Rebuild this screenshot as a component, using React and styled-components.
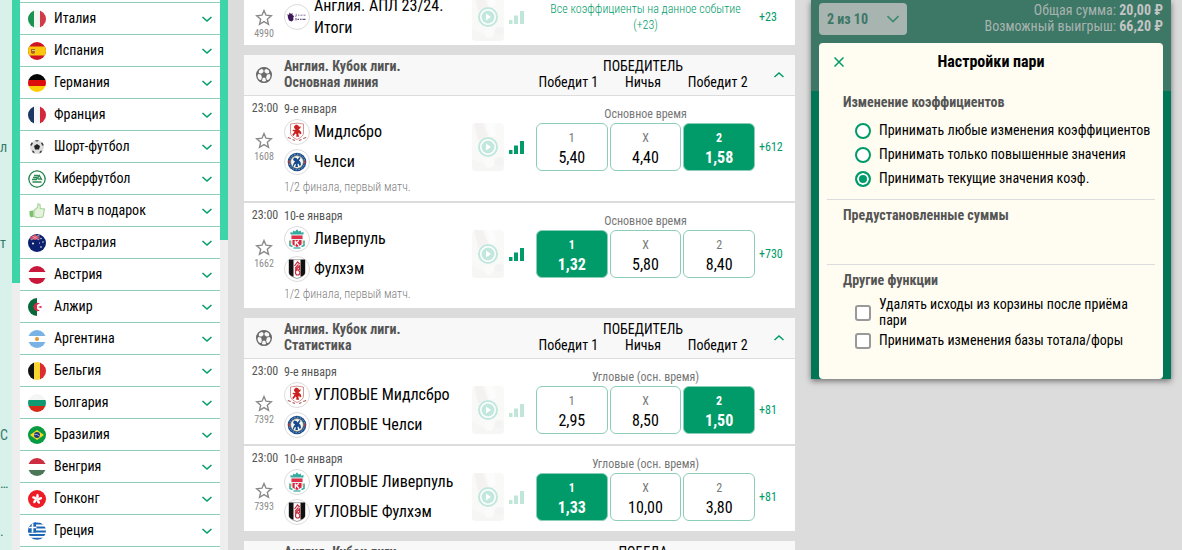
import React, { useState } from "react"
import styled, { createGlobalStyle } from "styled-components"

const GREEN = "#009b69"

const countries = [
    { name: "Италия", icon: "it" },
    { name: "Испания", icon: "es" },
    { name: "Германия", icon: "de" },
    { name: "Франция", icon: "fr" },
    { name: "Шорт-футбол", icon: "ball" },
    { name: "Киберфутбол", icon: "ea" },
    { name: "Матч в подарок", icon: "like" },
    { name: "Австралия", icon: "au" },
    { name: "Австрия", icon: "at" },
    { name: "Алжир", icon: "dz" },
    { name: "Аргентина", icon: "ar" },
    { name: "Бельгия", icon: "be" },
    { name: "Болгария", icon: "bg" },
    { name: "Бразилия", icon: "br" },
    { name: "Венгрия", icon: "hu" },
    { name: "Гонконг", icon: "hk" },
    { name: "Греция", icon: "gr" },
]

const groups = [
    {
        title: "Англия. Кубок лиги.",
        subtitle: "Основная линия",
        market: "ПОБЕДИТЕЛЬ",
        columns: ["Победит 1", "Ничья", "Победит 2"],
        events: [
            {
                id: "1608", time: "23:00", date: "9-е января", live: true, more: "+612",
                teams: [{ name: "Мидлсбро", crest: "mid" }, { name: "Челси", crest: "che" }],
                note: "1/2 финала, первый матч.",
                period: "Основное время", odds: ["5,40", "4,40", "1,58"], picked: 2,
            },
            {
                id: "1662", time: "23:00", date: "10-е января", live: true, more: "+730",
                teams: [{ name: "Ливерпуль", crest: "liv" }, { name: "Фулхэм", crest: "ful" }],
                note: "1/2 финала, первый матч.",
                period: "Основное время", odds: ["1,32", "5,80", "8,40"], picked: 0,
            },
        ],
    },
    {
        title: "Англия. Кубок лиги.",
        subtitle: "Статистика",
        market: "ПОБЕДИТЕЛЬ",
        columns: ["Победит 1", "Ничья", "Победит 2"],
        events: [
            {
                id: "7392", time: "23:00", date: "9-е января", more: "+81",
                teams: [{ name: "УГЛОВЫЕ Мидлсбро", crest: "mid" }, { name: "УГЛОВЫЕ Челси", crest: "che" }],
                period: "Угловые (осн. время)", odds: ["2,95", "8,50", "1,50"], picked: 2,
            },
            {
                id: "7393", time: "23:00", date: "10-е января", more: "+81",
                teams: [{ name: "УГЛОВЫЕ Ливерпуль", crest: "liv" }, { name: "УГЛОВЫЕ Фулхэм", crest: "ful" }],
                period: "Угловые (осн. время)", odds: ["1,33", "10,00", "3,80"], picked: 0,
            },
        ],
    },
    { title: "Англия. Кубок лиги.", market: "ПОБЕДА", columns: [], events: [] },
]

const oddNames = ["1", "X", "2"]
const sports = ["", "", "л", "", "т", "", "", "", "С", "…", "."]

const oddsChanges = [
    { value: "any", label: "Принимать любые изменения коэффициентов" },
    { value: "up", label: "Принимать только повышенные значения" },
    { value: "current", label: "Принимать текущие значения коэф." },
]

export default function App() {
    const [picked, setPicked] = useState({})

    function pick(id, index) {
        setPicked({ ...picked, [id]: index })
    }

    return (
        <Page>
            <GlobalStyle />
            <Sports>
                {sports.map((s, index) => <Sport key={index}>{s}</Sport>)}
            </Sports>
            <Track><Thumb size="283px" /></Track>
            <Countries>
                {countries.map((c) => (
                    <Country key={c.name} type="button">
                        <Flag name={c.icon} />
                        <CountryName>{c.name}</CountryName>
                        <Chevron />
                    </Country>
                ))}
            </Countries>
            <Track><Thumb size="240px" /></Track>
            <Feed>
                <Card>
                    <Outright>
                        <Favourite id="4990" low />
                        <Team>
                            <Crest name="apl" />
                            <span>Англия. АПЛ 23/24.<br />Итоги</span>
                        </Team>
                        <Preview />
                        <Bars />
                        <AllOdds href="#all">Все коэффициенты на данное событие (+23)</AllOdds>
                        <More href="#more">+23</More>
                    </Outright>
                </Card>
                {groups.map((g, index) => (
                    <Card key={index}>
                        <GroupHeader>
                            <Centered><Football /></Centered>
                            <h2>{g.title}<br />{g.subtitle}</h2>
                            <Market>
                                <p>{g.market}</p>
                                <MarketColumns>
                                    {g.columns.map((c) => <span key={c}>{c}</span>)}
                                </MarketColumns>
                            </Market>
                            <Fold type="button" aria-label="Свернуть"><Chevron up /></Fold>
                        </GroupHeader>
                        {g.events.map((e) => (
                            <Event key={e.id}>
                                <div>
                                    <Time>{e.time}</Time>
                                    <Favourite id={e.id} />
                                </div>
                                <Teams>
                                    <DateLine>{e.date}</DateLine>
                                    {e.teams.map((t) => (
                                        <Team key={t.name}>
                                            <Crest name={t.crest} />
                                            <span>{t.name}</span>
                                        </Team>
                                    ))}
                                    {e.note && <Note>{e.note}</Note>}
                                </Teams>
                                <Aligned><Preview /></Aligned>
                                <Aligned><Bars live={e.live} /></Aligned>
                                <div>
                                    <Period>{e.period}</Period>
                                    <Triple>
                                        {e.odds.map((o, i) => (
                                            <Odd
                                                key={i}
                                                type="button"
                                                $picked={(picked[e.id] ?? e.picked) === i}
                                                onClick={() => pick(e.id, i)}
                                            >
                                                <small>{oddNames[i]}</small>
                                                <span>{o}</span>
                                            </Odd>
                                        ))}
                                    </Triple>
                                </div>
                                <Aligned><More href="#more">{e.more}</More></Aligned>
                            </Event>
                        ))}
                    </Card>
                ))}
            </Feed>
            <Coupon />
        </Page>
    )
}

function Coupon() {
    const [change, setChange] = useState("current")

    return (
        <CouponBox>
            <CouponTop>
                <SelectBox>
                    <select aria-label="Система">
                        <option>2 из 10</option>
                    </select>
                    <svg width="12" height="8" viewBox="0 0 12 8" fill="none" stroke="#3d8a72" strokeWidth="1.6">
                        <path d="M.5 1L6 6.500 11.500 1" />
                    </svg>
                </SelectBox>
                <Totals>
                    <p>Общая сумма: <b>20,00 ₽</b></p>
                    <p>Возможный выигрыш: <b>66,20 ₽</b></p>
                </Totals>
            </CouponTop>
            <Settings>
                <SettingsTop>
                    <button type="button" aria-label="Закрыть">
                        <svg width="10" height="10" viewBox="0 0 10 10" stroke={GREEN} strokeWidth="1.5">
                            <path d="M.5 .5l9 9M9.5 .5l-9 9" />
                        </svg>
                    </button>
                    <h2>Настройки пари</h2>
                </SettingsTop>
                <Section>
                    <h3>Изменение коэффициентов</h3>
                    {oddsChanges.map((o) => (
                        <Option key={o.value}>
                            <input
                                type="radio"
                                name="change"
                                checked={change === o.value}
                                onChange={() => setChange(o.value)}
                            />
                            <span>{o.label}</span>
                        </Option>
                    ))}
                </Section>
                <Section $tall>
                    <h3>Предустановленные суммы</h3>
                </Section>
                <Section>
                    <h3>Другие функции</h3>
                    <Option>
                        <input type="checkbox" />
                        <span>Удалять исходы из корзины после приёма пари</span>
                    </Option>
                    <Option>
                        <input type="checkbox" />
                        <span>Принимать изменения базы тотала/форы</span>
                    </Option>
                </Section>
            </Settings>
        </CouponBox>
    )
}

function Favourite({ id, low }) {
    return (
        <Star type="button" $low={low}>
            <svg width="18" height="17" viewBox="0 0 18 17" fill="none" stroke="#8a8a8a" strokeWidth="1.400">
                <path d="M9 1.500l2 4.700 5.300.5-4 3.500 1.200 5.100L9 12.600l-4.500 2.700 1.200-5.100-4-3.500L7 6.200z" />
            </svg>
            <span>{id}</span>
        </Star>
    )
}

function Chevron({ up }) {
    return (
        <svg width="10" height="6" viewBox="0 0 10 6" fill="none" stroke={GREEN} strokeWidth="1.5">
            <path d={up ? "M.5 5L5 1l4.500 4" : "M.5 1L5 5l4.500-4"} />
        </svg>
    )
}

function Preview() {
    return (
        <PreviewBox type="button" aria-label="Трансляция">
            <svg width="32" height="48" viewBox="0 0 32 48">
                <rect width="32" height="48" fill="#f9f9f8" />
                <path d="M2 0h9l5 13-10 5z" fill="#f5f1f1" />
                <path d="M14 0h8l2 12-6 2z" fill="#fcfcfc" />
                <path d="M0 36l14 6 18-8v14H0z" fill="#f6f6f5" />
                <circle cx="17" cy="40" r="5" fill="#fbfbfb" />
                <circle cx="27" cy="38" r="4" fill="#f3f3f3" />
                <circle cx="16" cy="24" r="9" fill="#fff" stroke="#c2e7dc" strokeWidth="2" />
                <circle cx="16" cy="24" r="6.500" fill="#c2e7dc" />
                <path d="M14 20.500l5 3.500-5 3.500z" fill="#fff" />
            </svg>
        </PreviewBox>
    )
}

function Bars({ live }) {
    return (
        <BarsBox>
            <svg width="15" height="13" viewBox="0 0 15 13" fill={live ? GREEN : "#bfe6d9"}>
                <path d="M0 9h3.500v4H0zM5 4.500h4V13H5zM11 0h4v13h-4z" />
            </svg>
        </BarsBox>
    )
}

function Football() {
    return (
        <svg width="16" height="16" viewBox="0 0 16 16">
            <circle cx="8" cy="8" r="7.300" fill="#fafafa" stroke="#6b6b6b" strokeWidth="1.400" />
            <g fill="#6b6b6b">
                <path d="M8 4.800l3.200 2.300-1.200 3.700H6L4.800 7.100z" />
                <path d="M4.600 1.300L8 3.300l3.400-2L8 .3zM.4 9.200l2.700-2.600-.7-3.600L.5 6.200zM15.600 9.200l-2.700-2.600.7-3.600 1.900 3.200zM2.200 12.800l3.500.3 1.300 2.600-2.900-.8zM13.800 12.800l-3.500.3L9 15.700l2.900-.8z" />
            </g>
            <path d="M8 2.500v2.800M2.500 6.500l2.900.7M13.500 6.500l-2.900.7M5.500 13.500l.9-3.200M10.500 13.500l-.9-3.200" stroke="#6b6b6b" strokeWidth="1" />
        </svg>
    )
}

const stripes = {
    it: [1, "#1a9350", "#f4f5f0", "#cf3b48"],
    fr: [1, "#1c3764", "#f7f7f7", "#d3283b"],
    be: [1, "#111111", "#f6d62f", "#dd2b2f"],
    de: [0, "#050505", "#dd0c0c", "#fdcd05"],
    at: [0, "#c8173a", "#ffffff", "#c8173a"],
    ar: [0, "#79b3e6", "#ffffff", "#79b3e6"],
    bg: [0, "#f4f6f5", "#0f9a72", "#d62a18"],
    hu: [0, "#cd2d41", "#ffffff", "#4b7758"],
}

function Flag({ name }) {
    const s = stripes[name]
    return (
        <Round>
            <svg width="18" height="18" viewBox="0 0 18 18">
                {s && s.slice(1).map((color, i) => (
                    s[0]
                        ? <rect key={i} x={i * 6} width="6" height="18" fill={color} />
                        : <rect key={i} y={i * 6} width="18" height="6" fill={color} />
                ))}
                {name === "ar" && <circle cx="9" cy="9" r="2" fill="#dc9a3b" />}
                {name === "es" && (
                    <g>
                        <rect width="18" height="18" fill="#cf1522" />
                        <rect y="4.500" width="18" height="9" fill="#fbc70a" />
                        <path d="M3 7h4v4l-2 1-2-1z" fill="#a8622a" />
                        <path d="M4 8.500h3" stroke="#ddc48a" />
                    </g>
                )}
                {name === "ball" && (
                    <g>
                        <circle cx="9" cy="9" r="7" fill="#dedede" />
                        <path d="M9 6l3 2-1 3.500H7L6 8z" fill="#222" />
                        <path d="M2.200 7l1.300-2.500 1.600.6L3.500 8zM15.800 7l-1.300-2.500-1.600.6L14.500 8zM7 2.300h4L9.600 3.600H8.200zM4 12.500l2 .5.600 2.500-2-1zM14 12.500l-2 .5-.600 2.500 2-1z" fill="#444" />
                    </g>
                )}
                {name === "ea" && (
                    <g fill="none" stroke="#2c8a54">
                        <circle cx="9" cy="9" r="8.200" fill="#fff" strokeWidth="1.500" />
                        <path d="M6 5.500h4.500M5 7.500h4M4 9.500h4.500M8 10l3.300-4.500L14 10M10 9h3M4.500 12h9" strokeWidth="1.300" />
                    </g>
                )}
                {name === "like" && (
                    <g>
                        <path d="M1.500 9l4-.6V15l-4 .5z" fill="#7cc06c" />
                        <path d="M6 8.500l3.500-3 .5-3.500 2 .5.300 4 4.200.5L15 15l-6 .800-3-1.500z" fill="#e4f2de" stroke="#a3d098" strokeWidth="1.100" />
                    </g>
                )}
                {name === "au" && (
                    <g>
                        <rect width="18" height="18" fill="#0c2070" />
                        <path d="M2 1h10v5H2z" fill="#4a4a80" />
                        <path d="M2 3.500h9M7 0v6" stroke="#e8475c" strokeWidth="1.800" />
                        <path d="M3 1l8 5M11 1L3 6" stroke="#e9a9b6" strokeWidth=".8" />
                        <g fill="#fff">
                            <circle cx="5" cy="9.500" r="1" />
                            <circle cx="13" cy="4.500" r=".700" />
                            <circle cx="15" cy="8" r=".700" />
                            <circle cx="11.500" cy="9" r=".600" />
                            <circle cx="13" cy="13" r=".800" />
                        </g>
                    </g>
                )}
                {name === "dz" && (
                    <g>
                        <rect width="9" height="18" fill="#08683a" />
                        <rect x="9" width="9" height="18" fill="#fff" />
                        <path d="M12 5.800a4 4 0 1 0 0 6.400 3.200 3.200 0 1 1 0-6.400z" fill="#d92946" />
                        <path d="M10 9l3.500-1.300v2.600z" fill="#d92946" />
                    </g>
                )}
                {name === "br" && (
                    <g>
                        <rect width="18" height="18" fill="#079b42" />
                        <path d="M2 9l7-5 7 5-7 5z" fill="#f4dc21" />
                        <circle cx="9" cy="9" r="3" fill="#203a80" />
                        <path d="M6.200 8.400q3-.6 5.500 1.800" stroke="#cbd8e6" strokeWidth=".7" fill="none" />
                    </g>
                )}
                {name === "hk" && (
                    <g>
                        <rect width="18" height="18" fill="#ee1c26" />
                        {[0, 72, 144, 216, 288].map((a) => (
                            <ellipse key={a} cx="9.500" cy="6.300" rx="1.300" ry="2.600" fill="#fff" transform={`rotate(${a} 9 9)`} />
                        ))}
                    </g>
                )}
                {name === "gr" && (
                    <g>
                        <rect width="18" height="18" fill="#fff" />
                        <path d="M0 1.500h18M0 5.500h18M0 9.500h18M0 13h18M0 16.700h18" stroke="#1c66b4" strokeWidth="2" />
                        <rect width="8" height="10.500" fill="#1c66b4" />
                        <path d="M4.500 0v10.500M0 5.500h8.500" stroke="#fff" strokeWidth="1.700" />
                    </g>
                )}
            </svg>
        </Round>
    )
}

function Crest({ name }) {
    return (
        <CrestBox>
            <svg width="20" height="20" viewBox="0 0 20 20">
                {name === "apl" && (
                    <g fill="#3d195b">
                        <path d="M.5 7l1.500 1 .5-2.500 1.500 1.500L5.500 6l-.1 2L7 9l-.8 2 .3 2L4.500 14.500l-2.500-1L1 11z" />
                        <path d="M8.500 7.500h1.500v1H8.500zM11 7.700h1.500v.8H11zM13.500 7.700h2v.8h-2zM16.500 7.700h2v.8h-2zM8.500 9h.7v1h-.7zM8.500 11h1v2.500h-1zM10.500 11.700h1.500V13h-1.500zM13 11.700h1.500V13H13zM15.500 11.700h3V13h-3z" opacity=".8" />
                    </g>
                )}
                {name === "mid" && (
                    <g>
                        <path d="M3.500 2q6.500-1.800 13 0v9q0 3.500-6.500 6.500-6.500-3-6.500-6.500z" fill="#fff" stroke="#d08a85" strokeWidth=".9" />
                        <path d="M7 4.500l2-2 2.500 1 .5 1.500 1.500-1V6l-2 1.500 2 1.500 1 2.500-1.700 1-.6-1.700-1 1 1 3H9.200l.3-2.300-1-1-2 2.500-1.300-1L7.700 9.500 5.500 9 6 7.700 8.700 8 7.200 6z" fill="#cb211e" />
                        <path d="M.8 15.500l3 1M5.500 17.500l2.500 1M12 18.500l2.500-1M16.200 16.500l3-1" stroke="#b05a58" strokeWidth="1.100" />
                    </g>
                )}
                {name === "che" && (
                    <g>
                        <circle cx="10" cy="10" r="9.300" fill="#1b4f8f" />
                        <circle cx="10" cy="10" r="7.700" fill="none" stroke="#9fb2cb" strokeWidth=".8" strokeDasharray="1.500 1.500" />
                        <circle cx="10" cy="10" r="6.200" fill="#f4f6f8" stroke="#c8b060" strokeWidth=".6" />
                        <path d="M7 5.500l2.500.5 1 1.500L12.500 5l1 1-1.500 2.500 1.500 1.500.5 3-1.500 1-1-2.500-1 .5.500 3H8.300L9 12l-1.500.5-.7 2H5.700l.8-3L8 9.500 6 8z" fill="#174a8c" />
                        <path d="M2.300 8.500v3M17.700 8.500v3" stroke="#c0383f" strokeWidth="1.400" />
                    </g>
                )}
                {name === "liv" && (
                    <g>
                        <path d="M3.500 5.500V3l2 .7 1-2.200 1.700 1L10 .3l1.800 2.200 1.700-1 1 2.200 2-.7v2.500z" fill="#35aa9e" />
                        <path d="M4 6h12v9l-6 3.500L4 15z" fill="#e5eeee" />
                        <path d="M4.500 6.500h11V10h-11z" fill="#e0304a" />
                        <path d="M5.500 11h9v4.500L10 18l-4.500-2.500z" fill="#dc213f" />
                        <path d="M8.300 11.500v5M8.500 14l3.500-2.500M9.500 13.500l2.500 3" stroke="#fff" strokeWidth="1.300" />
                        <path d="M3 11.500v5l2.500 1M17 11.500v5l-2.500 1" stroke="#39aca0" strokeWidth="1.600" fill="none" />
                        <path d="M2.500 13h2M15.500 13h2" stroke="#e88a3c" strokeWidth="1.200" />
                        <path d="M6.500 19h7" stroke="#27a69a" strokeWidth="1.200" />
                    </g>
                )}
                {name === "ful" && (
                    <g>
                        <path d="M2 .7h16v13q0 3.500-8 5.800-8-2.300-8-5.800z" fill="#fff" stroke="#666" strokeWidth=".6" />
                        <path d="M2 .7h4.500v17q-4.500-1.500-4.500-4zM18 .7h-4.500v17q4.500-1.500 4.500-4z" fill="#111" />
                        <path d="M7.500 7l3-4 2.200 2M8 9.500l3.500-4M8 11.500l4.500-4.500v3.500q-4 0-4 2.800t2.200 2.700 2.200-2.300-2-2.200" stroke="#c7283a" strokeWidth="1.200" fill="none" />
                    </g>
                )}
            </svg>
        </CrestBox>
    )
}

const GlobalStyle = createGlobalStyle`
    * {
        box-sizing: border-box;
    }
    body {
        margin: 0;
        background: #dcdcdc;
        font-family: "Roboto Condensed", "Liberation Sans Narrow", Roboto, sans-serif;
        font-size: 14px;
        line-height: 16px;
        color: #000000;
    }
    h2, h3, p {
        margin: 0;
        font-size: inherit;
    }
    button, select {
        padding: 0;
        border: none;
        background: none;
        font: inherit;
        color: inherit;
        cursor: pointer;
    }
    a {
        color: ${GREEN};
        text-decoration: none;
    }
    svg {
        display: block;
        flex: none;
    }
`

const Page = styled.div`
    display: flex;
    height: 100vh;
    overflow: hidden;
`

const Sports = styled.nav`
    flex: none;
    width: 12px;
    padding-top: 27px;
    background: #d8f1ea;
`

const Sport = styled.div`
    display: flex;
    align-items: center;
    height: 48px;
    color: #33796a;
`

const Track = styled.div`
    flex: none;
    width: 8px;
    background: #eeeeee;
`

const Thumb = styled.div`
    height: ${(props) => props.size};
    background: #3dd4a7;
`

const Countries = styled.nav`
    flex: none;
    width: 200px;
    padding-top: 2px;
    background: #ffffff;
`

const Country = styled.button`
    display: grid;
    grid-template-columns: 18px 1fr 10px;
    column-gap: 8px;
    align-items: center;
    width: 100%;
    height: 32px;
    padding: 0 8px;
    border-top: 1px solid #8ccdb9;
    text-align: left;
    &:last-child {
        height: 33px;
        border-bottom: 1px solid #8ccdb9;
    }
`

const CountryName = styled.span`
    padding-bottom: 2px;
`

const Round = styled.span`
    display: block;
    overflow: hidden;
    width: 18px;
    height: 18px;
    border-radius: 50%;
`

const Feed = styled.main`
    display: flex;
    flex: 1;
    flex-direction: column;
    gap: 10px;
    min-width: 500px;
    margin: -7px 16px 0 16px;
`

const Card = styled.section`
    flex: none;
    background: #ffffff;
`

const Row = styled.div`
    display: grid;
    grid-template-columns: 40px 1fr 32px 32px 219px 40px;
`

const Outright = styled(Row)`
    align-items: center;
    padding-bottom: 4px;
`

const GroupHeader = styled(Row)`
    grid-template-columns: 40px 1fr 224px 40px;
    height: 41px;
    border-bottom: 1px solid #dcdcdc;
    background: #f8f8f8;
    h2 {
        padding-top: 3px;
        font-weight: 700;
        color: #555555;
    }
`

const Centered = styled.div`
    display: flex;
    align-items: center;
    justify-content: center;
`

const Market = styled.div`
    padding-top: 3px;
    text-align: center;
`

const Fold = styled.button`
    padding-left: 19px;
`

const Triple = styled.div`
    display: grid;
    grid-template-columns: repeat(3, 1fr);
    gap: 2px;
    text-align: center;
`

const MarketColumns = styled(Triple)`
    gap: 0;
`

const Event = styled(Row)`
    & + & {
        border-top: 2px solid #dcdcdc;
    }
`

const Time = styled.div`
    height: 27px;
    padding: 4px 0 0 2px;
    font-size: 12px;
    text-align: center;
    color: #555555;
`

const Star = styled.button`
    display: flex;
    flex-direction: column;
    gap: 1px;
    align-items: center;
    justify-content: ${(props) => (props.$low ? "flex-end" : "center")};
    width: 40px;
    height: 48px;
    padding-top: 2px;
    font-size: 10px;
    line-height: 14px;
    color: #8c8c8c;
`

const Teams = styled.div`
    padding: 5px 0 4px 0;
`

const DateLine = styled.div`
    font-size: 12px;
    line-height: 16px;
    color: #555555;
`

const Team = styled.div`
    display: flex;
    align-items: center;
    gap: 4px;
    min-height: 30px;
    font-size: 16px;
    line-height: 22px;
`

const CrestBox = styled.span`
    display: flex;
    flex: none;
    align-items: center;
    justify-content: center;
    width: 26px;
    height: 26px;
    border: 1px solid #dcdcdc;
    border-radius: 50%;
    background: #ffffff;
`

const Note = styled.div`
    font-size: 12px;
    font-weight: 300;
    line-height: 20px;
    color: #808080;
`

const Aligned = styled.div`
    padding-top: 27px;
`

const PreviewBox = styled.button`
    display: block;
    overflow: hidden;
    border-radius: 4px;
`

const BarsBox = styled.span`
    display: flex;
    align-items: center;
    height: 48px;
    padding-left: 5px;
`

const Period = styled.div`
    padding: 10px 0 1px 0;
    font-size: 12px;
    text-align: center;
    color: #777777;
`

const Odd = styled.button`
    display: flex;
    flex-direction: column;
    gap: 1px;
    align-items: center;
    height: 48px;
    padding-top: 5px;
    border: 1px solid #8ccdb9;
    border-radius: 6px;
    background: ${(props) => (props.$picked ? GREEN : "#ffffff")};
    color: ${(props) => (props.$picked ? "#ffffff" : "#000000")};
    font-size: 16px;
    font-weight: ${(props) => (props.$picked ? 700 : 400)};
    line-height: 20px;
    small {
        font-size: 12px;
        line-height: 18px;
        color: ${(props) => (props.$picked ? "#ffffff" : "#777777")};
    }
`

const More = styled.a`
    display: flex;
    align-items: center;
    height: 48px;
    padding-left: 4px;
    font-size: 12px;
`

const AllOdds = styled.a`
    padding: 0 8px;
    font-size: 12px;
    font-weight: 300;
    text-align: center;
`

const CouponBox = styled.aside`
    flex: none;
    align-self: flex-start;
    width: 360px;
    margin-right: 11px;
    padding: 2px 8px 0 8px;
    background: linear-gradient(#3d7766 91px, #007657 91px);
    box-shadow: 0 2px 6px rgba(0, 0, 0, 0.5);
`

const CouponTop = styled.div`
    display: flex;
    justify-content: space-between;
    height: 41px;
`

const SelectBox = styled.div`
    display: grid;
    grid-template-columns: 1fr 20px;
    align-items: center;
    width: 88px;
    height: 32px;
    margin-top: 1px;
    border-radius: 4px;
    background: #a8b4b0;
    select {
        grid-area: 1 / 1 / 2 / 3;
        height: 32px;
        padding-left: 8px;
        appearance: none;
        font-weight: 700;
        color: #3d7766;
    }
    svg {
        grid-area: 1 / 2;
        pointer-events: none;
    }
`

const Totals = styled.div`
    text-align: right;
    color: #a8b4b0;
    b {
        color: #c3c5c4;
    }
`

const Settings = styled.div`
    padding: 0 8px 18px 8px;
    border-radius: 4px;
    background: #fffdf1;
`

const SettingsTop = styled.header`
    display: grid;
    grid-template-columns: 24px 1fr 24px;
    align-items: center;
    height: 38px;
    button {
        padding-left: 7px;
    }
    h2 {
        font-size: 16px;
        font-weight: 700;
        text-align: center;
    }
`

const Section = styled.section`
    padding: 7px 0 8px 16px;
    min-height: ${(props) => (props.$tall ? "65px" : "0")};
    & + & {
        border-top: 1px solid #dcdcdc;
    }
    header + & {
        padding-top: 13px;
    }
    h3 {
        padding-bottom: 9px;
        font-weight: 700;
        color: #555555;
    }
`

const Option = styled.label`
    display: flex;
    align-items: center;
    gap: 8px;
    min-height: 24px;
    padding-left: 12px;
    span {
        margin: -1px 0 1px 0;
    }
    input {
        flex: none;
        width: 16px;
        height: 16px;
        margin: 0;
        appearance: none;
        border: 2px solid #999999;
        border-radius: 3px;
        background: #ffffff;
    }
    input[type="radio"] {
        border-color: ${GREEN};
        border-radius: 50%;
    }
    input:checked {
        background: ${GREEN};
        box-shadow: inset 0 0 0 2px #ffffff;
    }
`
